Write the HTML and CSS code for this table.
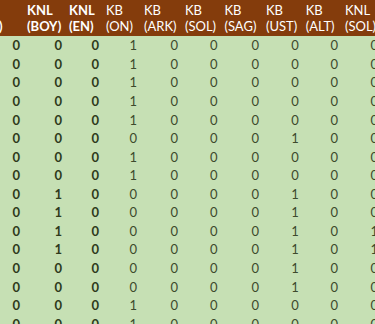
FILE: index.html
```html
<!DOCTYPE html>
<html>
<head>
<meta charset="utf-8">
<link rel="stylesheet" href="styles.css">
</head>
<body>
<div class="sheet">
<table class="grid">
<colgroup>
<col class="c0"><col class="c1"><col class="c2"><col class="c3"><col class="c4"><col class="c5"><col class="c6"><col class="c7"><col class="c8"><col class="c9">
</colgroup>
<thead>
<tr class="head">
<th class="b">KB<br>(ALT)</th>
<th class="b">KNL<br>(BOY)</th>
<th class="b">KNL<br>(EN)</th>
<th>KB<br>(ON)</th>
<th>KB<br>(ARK)</th>
<th>KB<br>(SOL)</th>
<th>KB<br>(SAG)</th>
<th>KB<br>(UST)</th>
<th>KB<br>(ALT)</th>
<th>KNL<br>(SOL)</th>
</tr>
</thead>
<tbody>
<tr><td class="b">0</td><td class="b">0</td><td class="b">0</td><td>1</td><td>0</td><td>0</td><td>0</td><td>0</td><td>0</td><td>0</td></tr>
<tr><td class="b">0</td><td class="b">0</td><td class="b">0</td><td>1</td><td>0</td><td>0</td><td>0</td><td>0</td><td>0</td><td>0</td></tr>
<tr><td class="b">0</td><td class="b">0</td><td class="b">0</td><td>1</td><td>0</td><td>0</td><td>0</td><td>0</td><td>0</td><td>0</td></tr>
<tr><td class="b">0</td><td class="b">0</td><td class="b">0</td><td>1</td><td>0</td><td>0</td><td>0</td><td>0</td><td>0</td><td>0</td></tr>
<tr><td class="b">0</td><td class="b">0</td><td class="b">0</td><td>1</td><td>0</td><td>0</td><td>0</td><td>0</td><td>0</td><td>0</td></tr>
<tr><td class="b">0</td><td class="b">0</td><td class="b">0</td><td>0</td><td>0</td><td>0</td><td>0</td><td>1</td><td>0</td><td>0</td></tr>
<tr><td class="b">0</td><td class="b">0</td><td class="b">0</td><td>1</td><td>0</td><td>0</td><td>0</td><td>0</td><td>0</td><td>0</td></tr>
<tr><td class="b">0</td><td class="b">0</td><td class="b">0</td><td>1</td><td>0</td><td>0</td><td>0</td><td>0</td><td>0</td><td>0</td></tr>
<tr><td class="b">0</td><td class="b">1</td><td class="b">0</td><td>0</td><td>0</td><td>0</td><td>0</td><td>1</td><td>0</td><td>0</td></tr>
<tr><td class="b">0</td><td class="b">1</td><td class="b">0</td><td>0</td><td>0</td><td>0</td><td>0</td><td>1</td><td>0</td><td>0</td></tr>
<tr><td class="b">0</td><td class="b">1</td><td class="b">0</td><td>0</td><td>0</td><td>0</td><td>0</td><td>1</td><td>0</td><td>1</td></tr>
<tr><td class="b">0</td><td class="b">1</td><td class="b">0</td><td>0</td><td>0</td><td>0</td><td>0</td><td>1</td><td>0</td><td>1</td></tr>
<tr><td class="b">0</td><td class="b">0</td><td class="b">0</td><td>0</td><td>0</td><td>0</td><td>0</td><td>1</td><td>0</td><td>0</td></tr>
<tr><td class="b">0</td><td class="b">0</td><td class="b">0</td><td>0</td><td>0</td><td>0</td><td>0</td><td>1</td><td>0</td><td>0</td></tr>
<tr><td class="b">0</td><td class="b">0</td><td class="b">0</td><td>1</td><td>0</td><td>0</td><td>0</td><td>0</td><td>0</td><td>0</td></tr>
<tr><td class="b">0</td><td class="b">0</td><td class="b">0</td><td>1</td><td>0</td><td>0</td><td>0</td><td>0</td><td>0</td><td>0</td></tr>
</tbody>
</table>
</div>
</body>
</html>
```
FILE: styles.css
```css
html, body {
  margin: 0;
  padding: 0;
  background: #c6e0b4;
}
.sheet {
  width: 375px;
  height: 324px;
  overflow: hidden;
  background: #c6e0b4;
}
.grid {
  border-collapse: collapse;
  table-layout: fixed;
  width: 412px;
  margin-left: -30px;
  font-family: Lato, "Liberation Sans", sans-serif;
  font-size: 13px;
}
.c0 { width: 54px; }
.c1 { width: 42px; }
.c2 { width: 37px; }
.c3 { width: 38px; }
.c4 { width: 41px; }
.c5 { width: 39.5px; }
.c6 { width: 41.5px; }
.c7 { width: 39.7px; }
.c8 { width: 39.3px; }
.c9 { width: 40px; }
.head th {
  background: #843c0c;
  color: #ffffff;
  font-weight: normal;
  text-align: left;
  vertical-align: middle;
  padding: 0 0 0 3px;
  height: 36px;
  line-height: 16px;
  white-space: nowrap;
}
.head th.b { font-weight: bold; }
tbody td {
  height: 18.57px;
  padding: 0 4px 0 0;
  text-align: right;
  color: #3d4a2c;
  line-height: 18px;
  white-space: nowrap;
}
tbody td.b {
  font-weight: bold;
  color: #2e3a1c;
}
```
